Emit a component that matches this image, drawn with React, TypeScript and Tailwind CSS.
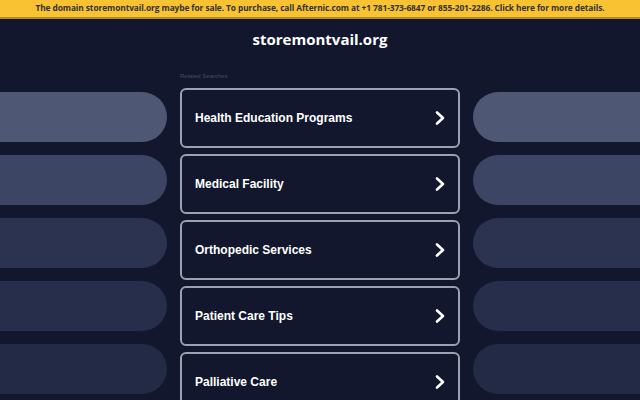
import React from "react";

const items = [
  "Health Education Programs",
  "Medical Facility",
  "Orthopedic Services",
  "Patient Care Tips",
  "Palliative Care",
];

const pillColors = ["bg-[#4e5874]", "bg-[#3c4563]", "bg-[#2b3351]", "bg-[#262e4b]", "bg-[#222a46]"];

function Chevron() {
  return (
    <svg width="14" height="16" viewBox="0 0 14 16" fill="none">
      <path d="M4 2.5 L10 8 L4 13.5" stroke="white" strokeWidth="2.6" strokeLinecap="round" strokeLinejoin="round" />
    </svg>
  );
}

export default function App() {
  return (
    <div className="w-[640px] h-[400px] overflow-hidden bg-[#12172d] flex flex-col">
      <div className="h-[19px] shrink-0 bg-[#f8c232] border-b-2 border-[#b58a1c] flex items-center justify-center">
        <span className="text-[8.4px] font-bold text-[#333333] tracking-[-0.1px]" style={{ fontFamily: '"Open Sans", "Noto Sans", sans-serif' }}>
          The domain storemontvail.org maybe for sale. To purchase, call Afternic.com at +1 781-373-6847 or 855-201-2286. Click here for more details.
        </span>
      </div>
      <div className="flex justify-center pt-[9px] h-[52px] shrink-0">
        <span className="text-white text-[15px] font-bold leading-[22px]" style={{ fontFamily: '"Open Sans", "Noto Sans", sans-serif' }}>
          storemontvail.org
        </span>
      </div>
      <div className="flex gap-[13px]">
        <div className="flex flex-col gap-[13px] pt-[21px] w-[167px] shrink-0">
          {pillColors.map((c, i) => (
            <div key={i} className={`h-[50px] w-full rounded-r-[25px] ${c}`} />
          ))}
        </div>
        <div className="w-[280px] shrink-0 flex flex-col">
          <div className="h-[17px] text-[6px] text-[#454c66] pt-[1px]" style={{ fontFamily: '"Liberation Sans", Arial, sans-serif' }}>
            Related Searches
          </div>
          <div className="flex flex-col gap-[6px]">
            {items.map((t) => (
              <div key={t} className="h-[60px] shrink-0 border-2 border-[#9ba1b1] rounded-[6px] flex items-center justify-between pl-[13px] pr-[11px]">
                <span className="text-white text-[12px] font-bold" style={{ fontFamily: '"Liberation Sans", Arial, sans-serif' }}>{t}</span>
                <Chevron />
              </div>
            ))}
          </div>
        </div>
        <div className="flex flex-col gap-[13px] pt-[21px] flex-1">
          {pillColors.map((c, i) => (
            <div key={i} className={`h-[50px] w-full rounded-l-[25px] ${c}`} />
          ))}
        </div>
      </div>
    </div>
  );
}
